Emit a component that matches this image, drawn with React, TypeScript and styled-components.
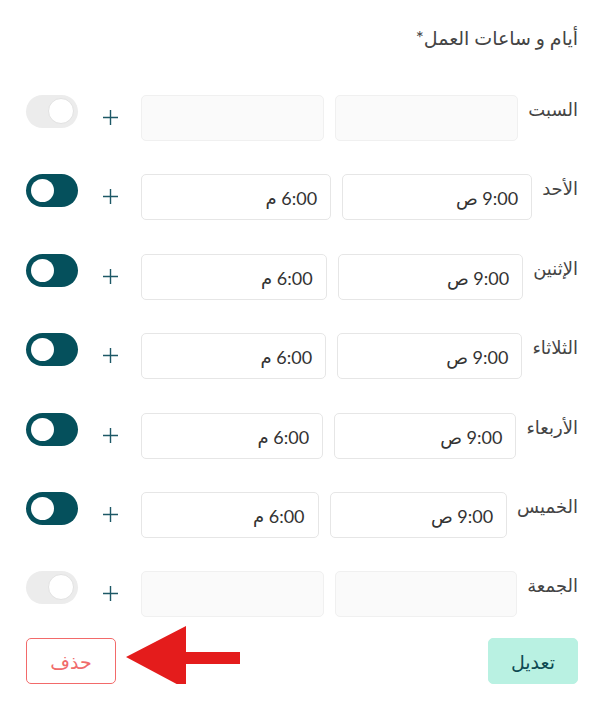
import React from 'react';
import styled, { createGlobalStyle } from 'styled-components';

const GlobalStyle = createGlobalStyle`
  body {
    margin: 0;
    background: #fff;
    font-family: Lato, "DejaVu Sans", sans-serif;
  }
`;

const Page = styled.div`
  direction: rtl;
  width: 606px;
  box-sizing: border-box;
  padding: 25px 28px 0 26px;
`;

const Title = styled.div`
  font-size: 19px;
  color: #444;
  line-height: 26px;
  margin-bottom: 44px;
`;

const Rows = styled.div`
  display: flex;
  flex-direction: column;
  gap: 33.4px;
`;

const Row = styled.div`
  display: flex;
  align-items: flex-start;
`;

const DayLabel = styled.div`
  font-size: 18px;
  color: #444;
  line-height: 24px;
  padding-top: 2px;
  margin-left: 10px;
  white-space: nowrap;
`;

const Inputs = styled.div`
  flex: 1;
  display: flex;
  gap: 11px;
`;

const TimeBox = styled.div<{ $disabled?: boolean }>`
  flex: 1;
  height: 46px;
  box-sizing: border-box;
  border: 1px solid ${(p) => (p.$disabled ? '#f0f0f0' : '#e6e6e6')};
  background: ${(p) => (p.$disabled ? '#fafafa' : '#fff')};
  border-radius: 5px;
  display: flex;
  align-items: center;
  padding-right: 13px;
  padding-top: 2px;
  font-size: 18px;
  color: #333;
`;

const Actions = styled.div`
  display: flex;
  align-items: flex-start;
  gap: 25px;
  margin-right: 23px;
`;

const Plus = styled.svg`
  width: 15px;
  height: 15px;
  display: block;
  margin-top: 15px;
`;

const Toggle = styled.div<{ $on: boolean }>`
  width: 52px;
  height: 33px;
  box-sizing: border-box;
  border-radius: 17px;
  background: ${(p) => (p.$on ? '#05505c' : '#ececec')};
  position: relative;
  flex-shrink: 0;
`;

const Knob = styled.span<{ $on: boolean }>`
  position: absolute;
  top: ${(p) => (p.$on ? '5px' : '3px')};
  width: ${(p) => (p.$on ? '23px' : '26px')};
  height: ${(p) => (p.$on ? '23px' : '26px')};
  border-radius: 50%;
  background: #fff;
  box-sizing: border-box;
  border: ${(p) => (p.$on ? 'none' : '1px solid #e2e2e2')};
  ${(p) => (p.$on ? 'left: 5px;' : 'right: 4px;')}
`;

const Footer = styled.div`
  position: relative;
  display: flex;
  justify-content: space-between;
  margin-top: 21px;
`;

const Button = styled.button<{ $variant: 'edit' | 'delete' }>`
  width: 90px;
  height: 46px;
  border-radius: 5px;
  font-family: inherit;
  font-size: 19px;
  cursor: pointer;
  border: 1px solid ${(p) => (p.$variant === 'edit' ? '#b9f1e2' : '#f26a6a')};
  background: ${(p) => (p.$variant === 'edit' ? '#b9f1e2' : '#fff')};
  color: ${(p) => (p.$variant === 'edit' ? '#0d4a52' : '#f06b6b')};
`;

const Arrow = styled.svg`
  position: absolute;
  left: 98px;
  top: -12px;
  width: 120px;
  height: 64px;
`;

const days = [
  { name: 'السبت', on: false },
  { name: 'الأحد', on: true },
  { name: 'الإثنين', on: true },
  { name: 'الثلاثاء', on: true },
  { name: 'الأربعاء', on: true },
  { name: 'الخميس', on: true },
  { name: 'الجمعة', on: false },
];

const PlusIcon = () => (
  <Plus viewBox="0 0 15 15">
    <path d="M7.5 0v15M0 7.5h15" stroke="#1d5866" strokeWidth="1.4" fill="none" />
  </Plus>
);

const App = () => {
  return (
    <>
      <GlobalStyle />
      <Page>
        <Title>أيام و ساعات العمل*</Title>
        <Rows>
          {days.map((d) => (
            <Row key={d.name}>
              <DayLabel>{d.name}</DayLabel>
              <Inputs>
                <TimeBox $disabled={!d.on}>{d.on ? '9:00 ص' : ''}</TimeBox>
                <TimeBox $disabled={!d.on}>{d.on ? '6:00 م' : ''}</TimeBox>
              </Inputs>
              <Actions>
                <PlusIcon />
                <Toggle $on={d.on}>
                  <Knob $on={d.on} />
                </Toggle>
              </Actions>
            </Row>
          ))}
        </Rows>
        <Footer>
          <Button $variant="edit">تعديل</Button>
          <Button $variant="delete">حذف</Button>
          <Arrow viewBox="0 0 120 64">
            <polygon points="2,31 62,0 62,26 116,26 116,38 62,38 62,63" fill="#e41c1c" />
          </Arrow>
        </Footer>
      </Page>
    </>
  );
};

export default App;
